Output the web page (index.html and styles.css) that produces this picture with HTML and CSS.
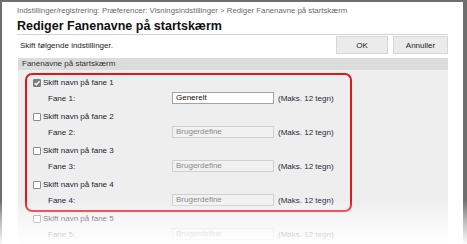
FILE: index.html
```html
<!DOCTYPE html>
<html lang="da">
<head>
<meta charset="utf-8">
<title>Rediger Fanenavne på startskærm</title>
<link rel="stylesheet" href="styles.css">
</head>
<body>
<div class="screen">
  <div class="window">
    <div class="page">
      <div class="crumb">Indstillinger/registrering: Præferencer: Visningsindstillinger &gt; Rediger Fanenavne på startskærm</div>
      <h1 class="title">Rediger Fanenavne på startskærm</h1>
      <div class="toolbar">
        <span class="hint">Skift følgende indstillinger.</span>
        <div class="buttons">
          <button class="btn btn-ok">OK</button>
          <button class="btn btn-cancel">Annuller</button>
        </div>
      </div>
      <div class="section-head">Fanenavne på startskærm</div>
      <div class="panel">
        <div class="group">
          <label class="check-row"><span class="cb cb-on"><svg viewBox="0 0 8 8" width="8" height="8"><path d="M1.6 4.2 L3.3 5.8 L6.5 2.2" fill="none" stroke="#fff" stroke-width="1.4"/></svg></span>Skift navn på fane 1</label>
          <div class="field-row"><span class="field-label">Fane 1:</span><span class="input">Generelt</span><span class="note">(Maks. 12 tegn)</span></div>
        </div>
        <div class="group">
          <label class="check-row"><span class="cb"></span>Skift navn på fane 2</label>
          <div class="field-row"><span class="field-label">Fane 2:</span><span class="input input-off">Brugerdefine</span><span class="note">(Maks. 12 tegn)</span></div>
        </div>
        <div class="group">
          <label class="check-row"><span class="cb"></span>Skift navn på fane 3</label>
          <div class="field-row"><span class="field-label">Fane 3:</span><span class="input input-off">Brugerdefine</span><span class="note">(Maks. 12 tegn)</span></div>
        </div>
        <div class="group">
          <label class="check-row"><span class="cb"></span>Skift navn på fane 4</label>
          <div class="field-row"><span class="field-label">Fane 4:</span><span class="input input-off">Brugerdefine</span><span class="note">(Maks. 12 tegn)</span></div>
        </div>
        <div class="group">
          <label class="check-row"><span class="cb"></span>Skift navn på fane 5</label>
          <div class="field-row"><span class="field-label">Fane 5:</span><span class="input input-off">Brugerdefine</span><span class="note">(Maks. 12 tegn)</span></div>
        </div>
      </div>
    </div>
  </div>
  <div class="highlight"></div>
  <div class="fade"></div>
</div>
</body>
</html>
```

FILE: styles.css
```css
html, body {
  margin: 0;
  padding: 0;
  background: #ffffff;
}

.screen {
  position: relative;
  width: 467px;
  height: 244px;
  overflow: hidden;
  font-family: "Liberation Sans", Arial, sans-serif;
}

.window {
  box-sizing: border-box;
  width: 467px;
  height: 244px;
  background: #ffffff;
  border-top: 2px solid #6e6e6e;
  border-left: 2px solid #6e6e6e;
  border-right: 4px solid #6e6e6e;
}

.page {
  padding: 4px 15px 0 15px;
}

.crumb {
  font-size: 7.8px;
  line-height: 10px;
  color: #6a6a6a;
  white-space: nowrap;
}

.title {
  margin: 3px 0 0;
  font-size: 12.5px;
  font-weight: bold;
  line-height: 15px;
  color: #111111;
  border-bottom: 1px solid #d2d2d2;
}

.toolbar {
  margin-top: 1px;
  margin-left: 1px;
  height: 18px;
  display: flex;
  align-items: center;
  justify-content: space-between;
}

.hint {
  padding-left: 2px;
  font-size: 8px;
  color: #222222;
}

.buttons {
  display: flex;
  gap: 5px;
  height: 18px;
}

.btn {
  box-sizing: border-box;
  height: 18px;
  margin: 0;
  padding: 0;
  font-family: inherit;
  font-size: 8px;
  color: #222222;
  background: #ebebeb;
  border: 1px solid #d6d6d6;
  border-radius: 0;
}

.btn-ok {
  width: 52px;
}

.btn-cancel {
  width: 55px;
}

.section-head {
  margin-top: 4px;
  margin-left: 1px;
  height: 12px;
  padding-left: 4px;
  background: #dcdcdc;
  font-size: 8px;
  line-height: 12px;
  color: #333333;
}

.panel {
  margin-left: 1px;
  background: #eeeeee;
  padding-top: 5px;
  height: 200px;
}

.group {
  margin-bottom: 3px;
}

.check-row {
  display: flex;
  align-items: center;
  height: 15px;
  padding-left: 15px;
  font-size: 8px;
  color: #1f2030;
}

.cb {
  box-sizing: border-box;
  width: 8px;
  height: 8px;
  margin-right: 2px;
  border: 1px solid #8c8c8c;
  border-radius: 1px;
  background: #ffffff;
  display: inline-flex;
  align-items: center;
  justify-content: center;
}

.cb-on {
  border-color: #7c7c7c;
  background: #7c7c7c;
}

.cb-on svg {
  display: block;
  flex: none;
}

.field-row {
  display: flex;
  align-items: center;
  height: 16px;
  padding-left: 30px;
  font-size: 8px;
  color: #1f2030;
}

.field-label {
  width: 124px;
}

.input {
  box-sizing: border-box;
  width: 102px;
  height: 12px;
  padding-left: 3px;
  line-height: 10px;
  background: #ffffff;
  border: 1px solid #a3a3a3;
  color: #111111;
}

.input-off {
  background: #f1f1f1;
  border-color: #cfcfcf;
  color: #8a8a8a;
}

.note {
  margin-left: 4px;
  color: #262a3a;
}

.highlight {
  position: absolute;
  left: 25px;
  top: 73px;
  width: 327px;
  height: 139px;
  box-sizing: border-box;
  border: 2px solid #e4141c;
  border-radius: 7px;
}

.fade {
  position: absolute;
  left: 0;
  right: 0;
  bottom: 0;
  height: 44px;
  background: linear-gradient(to bottom, rgba(255, 255, 255, 0) 0%, rgba(255, 255, 255, 0.5) 45%, rgba(255, 255, 255, 0.97) 100%);
}
```
